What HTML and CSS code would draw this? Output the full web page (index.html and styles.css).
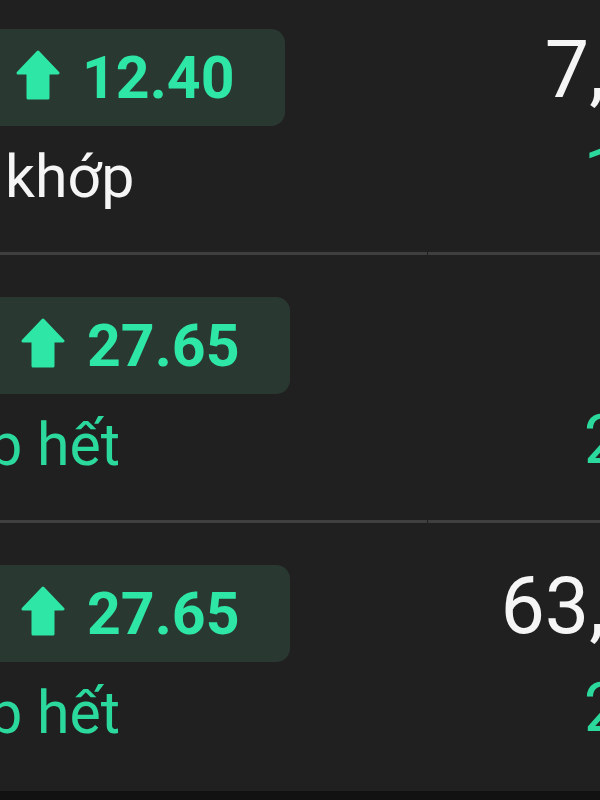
FILE: index.html
```html
<!DOCTYPE html>
<html lang="vi">
<head>
  <meta charset="UTF-8">
  <meta name="viewport" content="width=device-width, initial-scale=1.0">
  <title>Lệnh đặt</title>
  <link rel="stylesheet" href="styles.css">
</head>
<body>
  <div class="orders">
    <!-- Lệnh 1 -->
    <div class="order">
      <div class="order-left">
        <div class="price-badge price-badge--shift">
          <svg class="arrow" viewBox="0 0 44 50" width="44" height="50">
            <path d="M22 2 L42 23 L32 23 L32 48 L12 48 L12 23 L2 23 Z"/>
          </svg>
          <span class="price">12.40</span>
        </div>
        <div class="status status--pending">khớp</div>
      </div>
      <div class="order-right">
        <div class="volume">7,250</div>
        <div class="matched">1,250</div>
      </div>
    </div>

    <!-- Lệnh 2 -->
    <div class="order">
      <div class="order-left">
        <div class="price-badge">
          <svg class="arrow" viewBox="0 0 44 50" width="44" height="50">
            <path d="M22 2 L42 23 L32 23 L32 48 L12 48 L12 23 L2 23 Z"/>
          </svg>
          <span class="price">27.65</span>
        </div>
        <div class="status status--done"><span class="status-cut">Khớp hết</span></div>
      </div>
      <div class="order-right">
        <div class="volume">800</div>
        <div class="matched">2,500</div>
      </div>
    </div>

    <!-- Lệnh 3 -->
    <div class="order order--last">
      <div class="order-left">
        <div class="price-badge">
          <svg class="arrow" viewBox="0 0 44 50" width="44" height="50">
            <path d="M22 2 L42 23 L32 23 L32 48 L12 48 L12 23 L2 23 Z"/>
          </svg>
          <span class="price">27.65</span>
        </div>
        <div class="status status--done"><span class="status-cut">Khớp hết</span></div>
      </div>
      <div class="order-right">
        <div class="volume">63,200</div>
        <div class="matched">2,300</div>
      </div>
    </div>
  </div>

  <div class="bottom-bar"></div>
</body>
</html>
```

FILE: styles.css
```css
/* Generale */
body {
  margin: 0;
  padding: 0;
  width: 600px;
  height: 800px;
  background: #202020;
  overflow: hidden;
  font-family: Roboto, "Noto Sans", sans-serif;
  color: #f5f5f5;
  display: flex;
  flex-direction: column;
}

.orders {
  margin-top: -13px;
  flex: 1;
}

/* Riga ordine */
.order {
  display: grid;
  grid-template-columns: 427px 1fr;
  column-gap: 1px;
  height: 268px;
}

.order-left,
.order-right {
  border-bottom: 3px solid #3f3f3f;
  overflow: hidden;
}

.order--last .order-left,
.order--last .order-right {
  border-bottom: none;
}

.order-left {
  padding-top: 42px;
}

/* Badge prezzo */
.price-badge {
  display: flex;
  align-items: center;
  width: 310px;
  height: 97px;
  margin-left: -20px;
  padding-left: 41px;
  box-sizing: border-box;
  background: #2a3832;
  border-radius: 14px;
}

.price-badge--shift {
  margin-left: -25px;
}

.arrow {
  fill: #2ee6a6;
  stroke: #2ee6a6;
  stroke-width: 3;
  stroke-linejoin: round;
  margin-top: -6px;
}

.price {
  margin-left: 22px;
  font-size: 59px;
  font-weight: 700;
  color: #2ee6a6;
  line-height: 1;
}

/* Stato */
.status {
  margin-top: 16px;
  font-size: 59px;
  line-height: 70px;
  white-space: nowrap;
}

.status--pending {
  padding-left: 5px;
  color: #f5f5f5;
}

.status--done {
  color: #2cd99d;
}

.status-cut {
  display: inline-block;
  margin-left: -114px;
}

/* Colonna destra */
.order-right {
  padding-top: 44px;
  text-align: right;
  white-space: nowrap;
}

.volume {
  margin-right: -138px;
  font-size: 79px;
  line-height: 78px;
  color: #f5f5f5;
}

.matched {
  margin-top: 29px;
  margin-right: -150px;
  font-size: 68px;
  line-height: 68px;
  color: #2cd99d;
}

.bottom-bar {
  height: 11px;
  background: #121212;
}
```
